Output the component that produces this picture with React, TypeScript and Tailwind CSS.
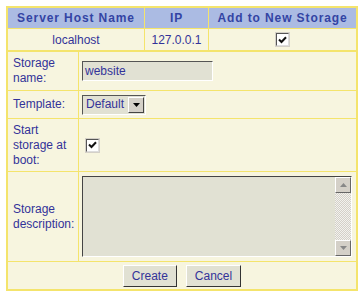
import React from 'react';

const font = "font-['Liberation_Sans',Arial,sans-serif]";

const Check = () => (
    <span className="inline-flex w-[13px] h-[13px] items-center justify-center bg-white border border-t-[#555] border-l-[#555] border-b-[#ddd] border-r-[#ddd] shadow-[0_0_0_1px_#d4d0c8]">
        <svg width="9" height="8" viewBox="0 0 9 8">
            <path d="M1 3.5 L3.5 6 L8 1.2" fill="none" stroke="#111" strokeWidth="2" />
        </svg>
    </span>
);

const App: React.FC = () => {
    return (
        <div className={`${font} w-[364px] h-[301px] bg-white pt-[6px] pl-[6px] text-[12px] text-[#333399]`}>
            <div className="w-[352px] border-2 border-[#f4e46c] bg-[#f7f5df]">
                {/* HOST TABLE */}
                <div className="grid grid-cols-[137px_64px_1fr] h-[21px] bg-[#abbbe3] font-bold text-[#3344a4] tracking-[0.9px] border-b border-[#f4e46c]">
                    <div className="flex items-center justify-center border-r border-[#f4e46c]">Server Host Name</div>
                    <div className="flex items-center justify-center border-r border-[#f4e46c]">IP</div>
                    <div className="flex items-center justify-center">Add to New Storage</div>
                </div>
                <div className="grid grid-cols-[137px_64px_1fr] h-[23px] border-b-2 border-[#f4e46c]">
                    <div className="flex items-center justify-center border-r border-[#f4e46c]">localhost</div>
                    <div className="flex items-center justify-center border-r border-[#f4e46c]">127.0.0.1</div>
                    <div className="flex items-center justify-center"><Check /></div>
                </div>

                {/* FORM */}
                <div className="grid grid-cols-[71px_1fr] leading-[15px]">
                    <div className="h-[39px] flex items-center pl-[5px] border-r border-b border-[#f4e46c]">Storage<br />name:</div>
                    <div className="h-[39px] flex items-center pl-[3px] border-b border-[#f4e46c]">
                        <div className="w-[131px] h-[20px] bg-[#e1e1d3] border border-t-[#555] border-l-[#555] border-b-[#fff] border-r-[#fff] px-[2px] flex items-center text-[#333399]">website</div>
                    </div>

                    <div className="h-[28px] flex items-center pl-[5px] border-r border-b border-[#f4e46c]">Template:</div>
                    <div className="h-[28px] flex items-center pl-[3px] border-b border-[#f4e46c]">
                        <div className="h-[20px] flex items-center bg-[#e1e1d3] border border-t-[#555] border-l-[#555] border-b-[#fff] border-r-[#fff]">
                            <span className="px-[3px] pr-[4px]">Default</span>
                            <span className="w-[16px] h-[16px] mr-[1px] flex items-center justify-center bg-[#d4d0c8] border border-t-[#fff] border-l-[#fff] border-b-[#444] border-r-[#444]">
                                <svg width="7" height="4" viewBox="0 0 7 4"><path d="M0 0 H7 L3.5 4 Z" fill="#000" /></svg>
                            </span>
                        </div>
                    </div>

                    <div className="h-[53px] flex items-center pl-[5px] border-r border-b border-[#f4e46c]">Start<br />storage at<br />boot:</div>
                    <div className="h-[53px] flex items-center pl-[7px] border-b border-[#f4e46c]"><Check /></div>

                    <div className="h-[90px] flex items-center pl-[5px] border-r border-b border-[#f4e46c]">Storage<br />description:</div>
                    <div className="h-[90px] flex items-center pl-[3px] pr-[4px] border-b border-[#f4e46c]">
                        <div className="w-full h-[81px] flex bg-[#e1e1d3] border border-t-[#444] border-l-[#444] border-b-[#fff] border-r-[#fff]">
                            <div className="flex-1" />
                            <div className="w-[16px] flex flex-col bg-[repeating-conic-gradient(#d4d0c8_0_25%,#f2f2ee_0_50%)] bg-[length:2px_2px]">
                                <span className="h-[16px] flex items-center justify-center bg-[#d4d0c8] border border-t-[#fff] border-l-[#fff] border-b-[#666] border-r-[#666]">
                                    <svg width="7" height="4" viewBox="0 0 7 4"><path d="M0 4 H7 L3.5 0 Z" fill="#888" /></svg>
                                </span>
                                <div className="flex-1" />
                                <span className="h-[16px] flex items-center justify-center bg-[#d4d0c8] border border-t-[#fff] border-l-[#fff] border-b-[#666] border-r-[#666]">
                                    <svg width="7" height="4" viewBox="0 0 7 4"><path d="M0 0 H7 L3.5 4 Z" fill="#888" /></svg>
                                </span>
                            </div>
                        </div>
                    </div>
                </div>
                <div className="h-[27px] flex items-center justify-center gap-[9px]">
                    <button className="h-[22px] px-[8px] bg-[#e1e1d3] border border-t-[#fff] border-l-[#fff] border-b-[#333] border-r-[#333] text-[#333399]">Create</button>
                    <button className="h-[22px] px-[8px] bg-[#e1e1d3] border border-t-[#fff] border-l-[#fff] border-b-[#333] border-r-[#333] text-[#333399]">Cancel</button>
                </div>
            </div>
        </div>
    );
};

export default App;
